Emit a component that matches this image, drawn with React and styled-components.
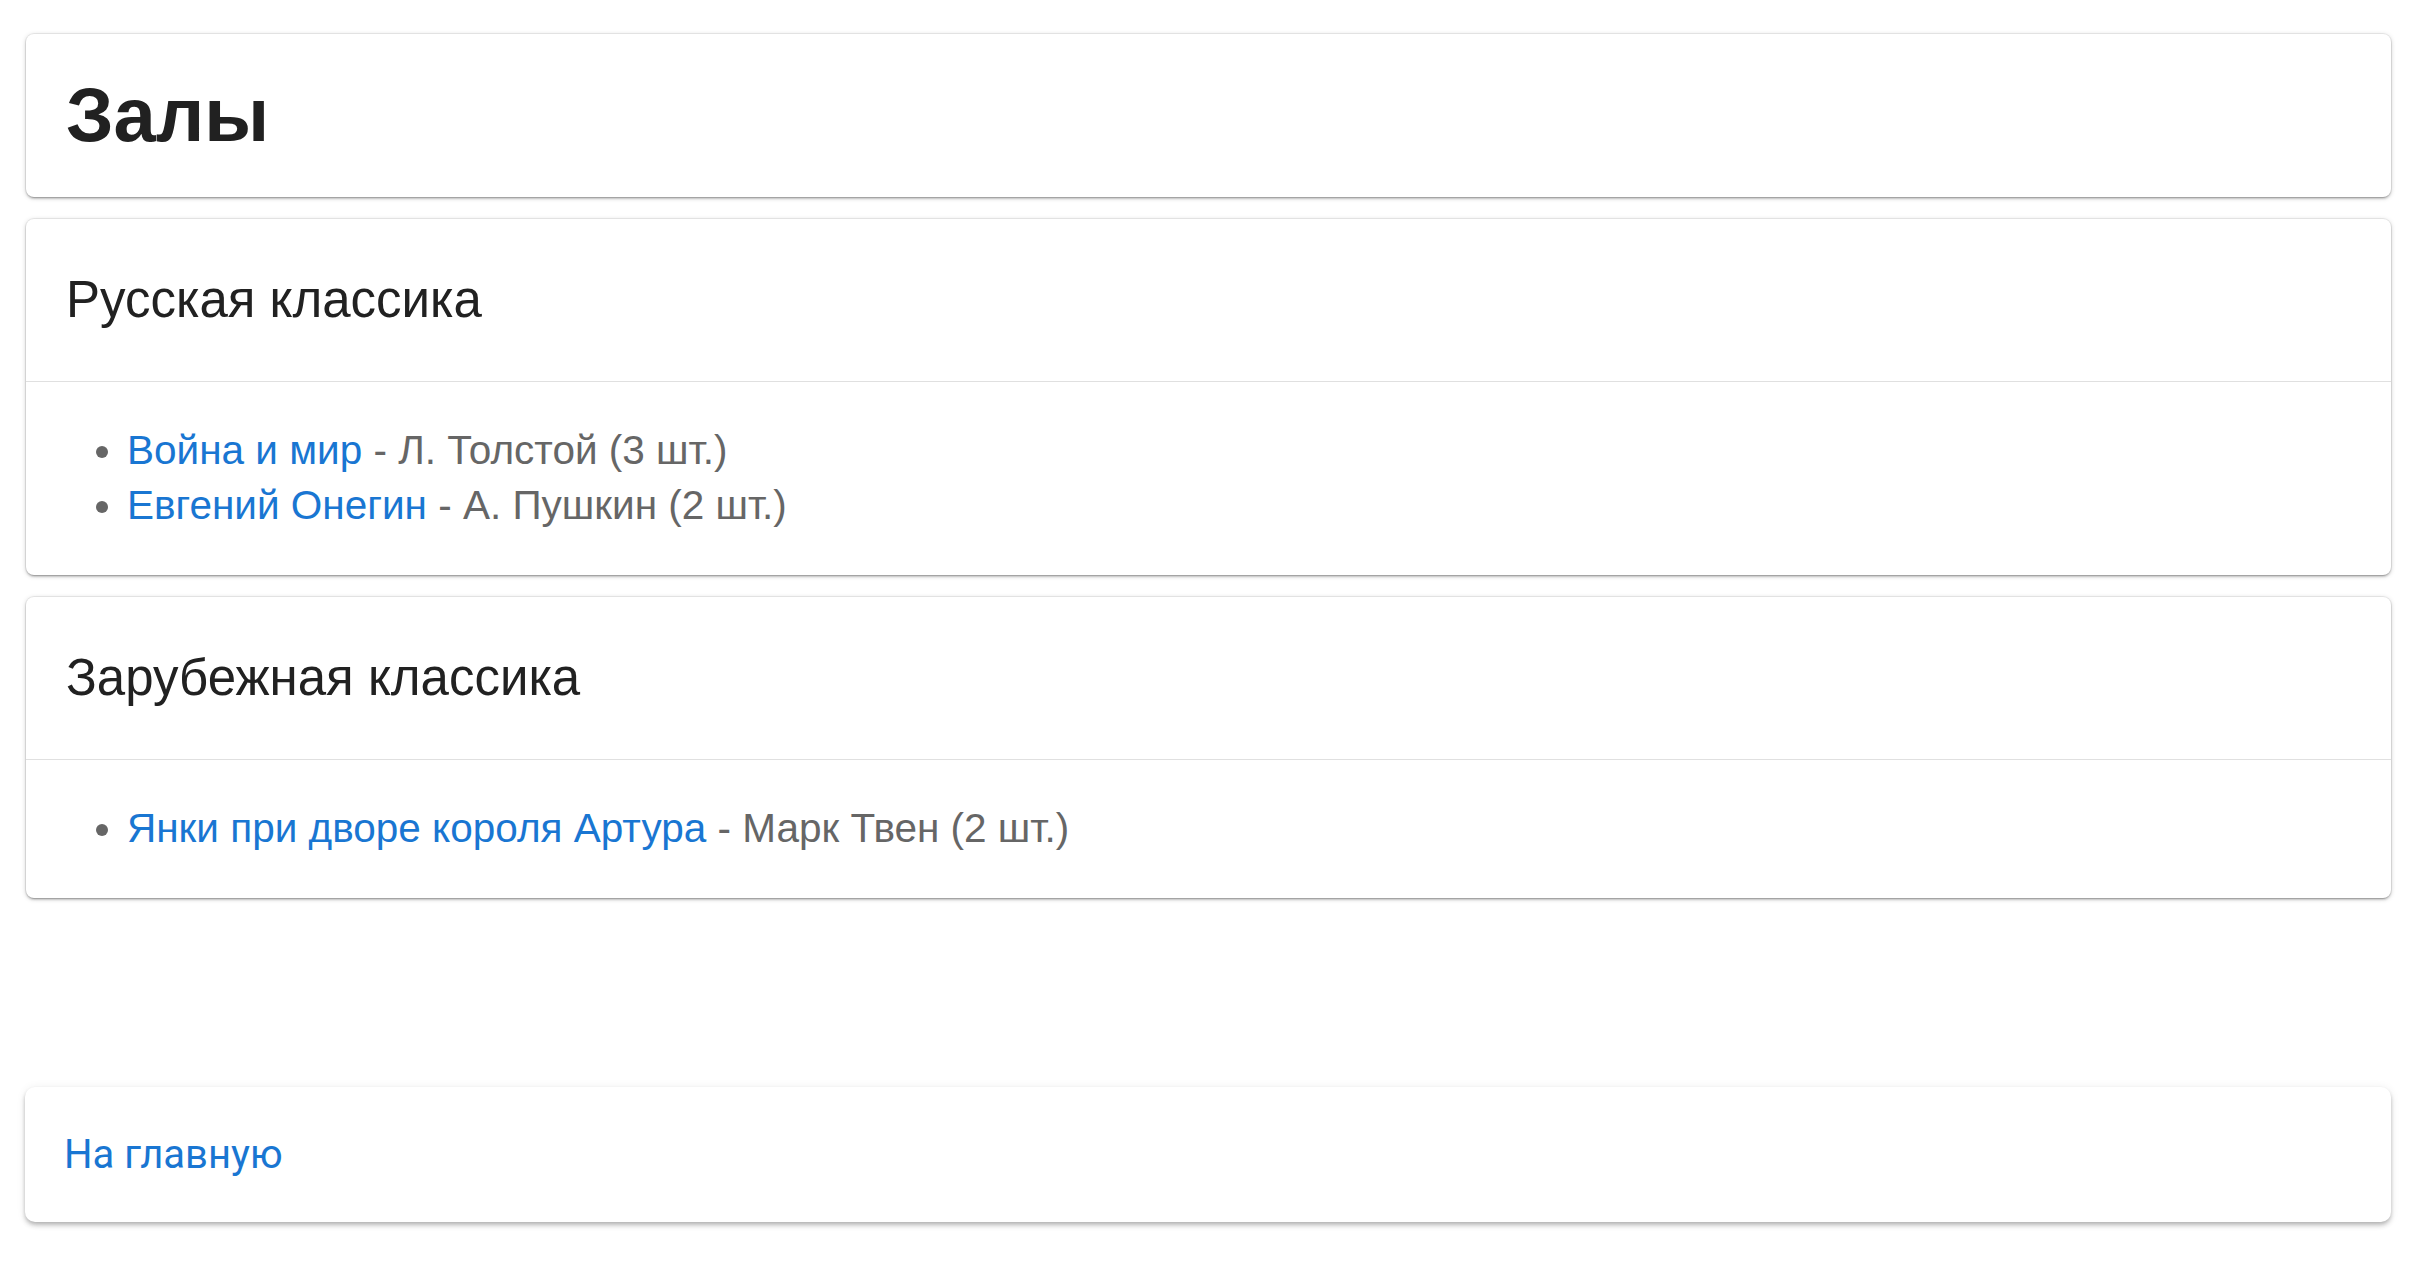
import React from 'react';
import styled, { createGlobalStyle } from 'styled-components';

const GlobalStyle = createGlobalStyle`
  html, body {
    margin: 0;
    padding: 0;
    background: #ffffff;
  }

  body {
    font-family: "Liberation Sans", Arial, sans-serif;
    color: #212121;
  }
`;

const Pagina = styled.div`
  display: flex;
  flex-direction: column;
  min-height: 100vh;
  box-sizing: border-box;
  padding: 34px 25px 40px 26px;
`;

const Conteudo = styled.main`
  display: flex;
  flex-direction: column;
  gap: 22px;
`;

const Cartao = styled.section`
  background: #ffffff;
  border-radius: 8px;
  box-shadow:
    0 0 0 1px rgba(0, 0, 0, 0.06),
    0 2px 2px 0 rgba(0, 0, 0, 0.14),
    0 3px 1px -2px rgba(0, 0, 0, 0.12),
    0 1px 5px 0 rgba(0, 0, 0, 0.2);
  overflow: hidden;
`;

const Titulo = styled.h1`
  margin: 0;
  padding: 36px 40px 37px;
  font-size: 76px;
  line-height: 90px;
  font-weight: 700;
  color: #212121;
`;

const CabecalhoCartao = styled.h2`
  margin: 0;
  padding: 50px 40px 50px 40px;
  font-size: 51px;
  line-height: 62px;
  font-weight: 400;
  color: #212121;
  border-bottom: 1px solid #e0e0e0;
`;

const CorpoCartao = styled.div`
  padding: 41px 40px 42px;
`;

const Lista = styled.ul`
  margin: 0;
  padding-left: 61px;
  color: #666666;
`;

const ItemLista = styled.li`
  font-size: 40.5px;
  line-height: 55px;
  color: #666666;
`;

const LinkLivro = styled.a`
  color: #1976d2;
  text-decoration: none;

  &:hover {
    text-decoration: underline;
  }
`;

const Rodape = styled.footer`
  margin-top: auto;
  background: #ffffff;
  border-radius: 10px;
  box-shadow:
    0 2px 4px -1px rgba(0, 0, 0, 0.2),
    0 4px 5px 0 rgba(0, 0, 0, 0.14),
    0 1px 10px 0 rgba(0, 0, 0, 0.08);
  padding: 44px 40px 44px 39px;
  margin-left: -1px;
`;

const LinkRodape = styled.a`
  font-family: Roboto, "Liberation Sans", Arial, sans-serif;
  font-size: 40px;
  line-height: 47px;
  color: #1976d2;
  text-decoration: none;
`;

const salas = [
  {
    nome: 'Русская классика',
    livros: [
      { titulo: 'Война и мир', autor: 'Л. Толстой', qtd: 3 },
      { titulo: 'Евгений Онегин', autor: 'А. Пушкин', qtd: 2 },
    ],
  },
  {
    nome: 'Зарубежная классика',
    livros: [
      { titulo: 'Янки при дворе короля Артура', autor: 'Марк Твен', qtd: 2 },
    ],
  },
];

function App() {
  return (
    <>
      <GlobalStyle />
      <Pagina>
        <Conteudo>
          <Cartao>
            <Titulo>Залы</Titulo>
          </Cartao>

          {salas.map(sala => (
            <Cartao key={sala.nome}>
              <CabecalhoCartao>{sala.nome}</CabecalhoCartao>
              <CorpoCartao>
                <Lista>
                  {sala.livros.map(livro => (
                    <ItemLista key={livro.titulo}>
                      <LinkLivro href="#">{livro.titulo}</LinkLivro>
                      {` - ${livro.autor} (${livro.qtd} шт.)`}
                    </ItemLista>
                  ))}
                </Lista>
              </CorpoCartao>
            </Cartao>
          ))}
        </Conteudo>

        <Rodape>
          <LinkRodape href="#">На главную</LinkRodape>
        </Rodape>
      </Pagina>
    </>
  );
}

export default App;
